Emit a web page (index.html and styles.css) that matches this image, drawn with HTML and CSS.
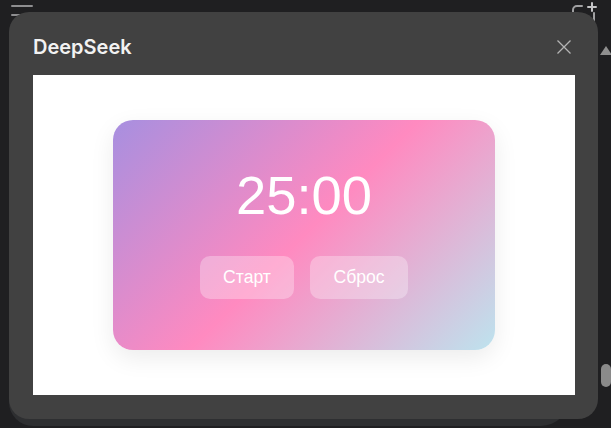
FILE: index.html
```html
<!DOCTYPE html>
<html lang="ru">
<head>
  <meta charset="UTF-8">
  <meta name="viewport" content="width=device-width, initial-scale=1.0">
  <title>DeepSeek</title>
  <link rel="stylesheet" href="styles.css">
</head>
<body>
  <div class="app-bg">
    <svg class="menu-icon" width="24" height="20" viewBox="0 0 24 20">
      <path d="M2 6h20M2 15h8" stroke="#8e8e90" stroke-width="2" stroke-linecap="round" fill="none"/>
    </svg>
    <svg class="chat-icon" width="28" height="24" viewBox="0 0 28 24">
      <path d="M13 6H8a4 4 0 0 0-4 4v10M25 13v8" stroke="#a0a0a2" stroke-width="2" stroke-linecap="round" fill="none"/>
      <path d="M23 3v8M19 7h8" stroke="#c4c4c6" stroke-width="2" stroke-linecap="round" fill="none"/>
    </svg>
    <div class="scroll-arrow"></div>
    <div class="scroll-thumb"></div>
  </div>

  <div class="modal-shadow"></div>
  <div class="modal">
    <div class="modal-header">
      <span class="modal-title">DeepSeek</span>
      <svg class="close-icon" width="16" height="16" viewBox="0 0 16 16">
        <path d="M1.500 1.500l13 13M14.500 1.500l-13 13" stroke="#b4b4b4" stroke-width="1.300" fill="none"/>
      </svg>
    </div>
    <div class="preview">
      <div class="timer-card">
        <div class="timer-time">25:00</div>
        <div class="timer-buttons">
          <button class="timer-btn btn-start">Старт</button>
          <button class="timer-btn btn-reset">Сброс</button>
        </div>
      </div>
    </div>
  </div>
</body>
</html>
```

FILE: styles.css
```css
html, body {
  margin: 0;
  padding: 0;
  height: 100%;
  overflow: hidden;
  background-color: #1f1f21;
}
.menu-icon {
  position: absolute;
  left: 10px;
  top: 0;
}
.chat-icon {
  position: absolute;
  left: 569px;
  top: 0;
}
.scroll-arrow {
  position: absolute;
  left: 600px;
  top: 46px;
  width: 0;
  height: 0;
  border-left: 6px solid transparent;
  border-right: 6px solid transparent;
  border-bottom: 9px solid #8f8f8f;
}
.scroll-thumb {
  position: absolute;
  left: 601px;
  top: 364px;
  width: 10px;
  height: 23px;
  border-radius: 5px;
  background-color: #8a8a8a;
}
.modal-shadow {
  position: absolute;
  left: 9px;
  top: 380px;
  width: 560px;
  height: 46px;
  border-radius: 0 0 28px 24px;
  background-color: #2e2f31;
}
.modal {
  position: absolute;
  left: 9px;
  top: 12px;
  width: 589px;
  height: 407px;
  box-sizing: border-box;
  padding: 0 23px 0 24px;
  border-radius: 20px;
  background-color: #414141;
  font-family: Inter, "Liberation Sans", sans-serif;
}
.modal-header {
  height: 63px;
  display: flex;
  align-items: center;
  justify-content: space-between;
  padding-right: 3px;
}
.modal-title {
  color: #f2f2f2;
  font-size: 20px;
  font-weight: 600;
  position: relative;
  top: 3px;
}
.close-icon {
  position: relative;
  top: 3px;
}
.preview {
  height: 320px;
  background: white;
  display: flex;
  align-items: center;
  justify-content: center;
}
.timer-card {
  width: 382px;
  height: 230px;
  box-sizing: border-box;
  padding-top: 42px;
  border-radius: 20px;
  background: linear-gradient(135deg, #a78fe0 0%, #ff8ac0 50%, #bde3ee 100%);
  box-shadow: 0 8px 24px rgba(0,0,0,0.08);
  text-align: center;
  font-family: "Liberation Sans", Arial, sans-serif;
  color: white;
}
.timer-time {
  font-size: 54.400px;
  line-height: 68px;
  margin-bottom: 26px;
}
.timer-buttons {
  display: flex;
  justify-content: center;
  gap: 16px;
}
.timer-btn {
  height: 43px;
  padding: 0;
  border: none;
  border-radius: 10px;
  background: rgba(255,255,255,0.3);
  color: white;
  font-family: inherit;
  font-size: 17.600px;
}
.btn-start {
  width: 94px;
}
.btn-reset {
  width: 98px;
}
```
